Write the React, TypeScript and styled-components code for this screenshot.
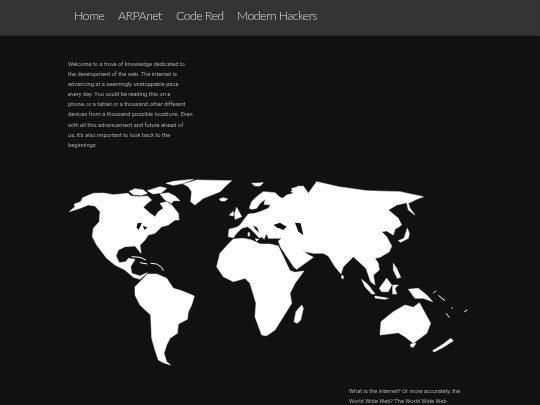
import * as React from "react";
import styled, { createGlobalStyle } from "styled-components";

const GlobalStyle = createGlobalStyle`
  html, body {
    margin: 0;
    height: 405px;
    overflow: hidden;
    background: #111111;
  }
`;

const links = ["Home", "ARPAnet", "Code Red", "Modern Hackers"];

const introLines = [
  "Welcome to a trove of knowledge dedicated to",
  "the development of the web. The internet is",
  "advancing at a seemingly unstoppable pace",
  "every day. You could be reading this on a",
  "phone, or a tablet or a thousand other different",
  "devices from a thousand possible locations. Even",
  "with all this advancement and future ahead of",
  "us, it's also important to look back to the",
  "beginnings.",
];

const questionLines = [
  "What is the internet? Or more accurately, the",
  "World Wide Web? The World Wide Web",
];

// coordinates are 3x page pixels, measured from (60, 170)
const land = [
  // north america
  "28,125 45,110 42,103 62,95 68,83 100,70 130,69 160,74 205,70 212,78 240,80 262,78 275,90 262,100 250,112 270,130 285,140 295,125 310,115 300,100 320,95 335,105 355,130 357,150 345,150 325,165 305,170 285,190 265,195 255,210 240,225 243,250 235,240 225,228 195,230 175,240 168,258 178,278 198,275 205,265 225,268 212,290 215,310 240,318 262,308 240,328 220,322 195,300 165,285 140,265 125,245 110,225 97,200 100,175 118,155 120,125 105,108 85,105 60,115",
  // arctic islands
  "208,64 225,56 250,60 262,70 245,76 220,74",
  "262,62 300,50 320,55 305,68 280,72",
  "300,72 325,68 345,78 360,92 340,92 335,100 315,90",
  "318,40 340,34 400,28 370,40 340,46",
  // greenland
  "370,42 410,30 515,32 500,45 480,65 455,75 430,85 405,105 392,95 395,65 385,50",
  // iceland
  "478,87 490,83 503,87 495,93 483,93",
  // south america
  "225,350 240,335 262,312 290,312 320,325 340,355 365,362 403,378 395,405 385,425 382,448 355,462 352,490 330,505 320,525 312,550 320,575 332,585 310,578 295,570 285,540 275,505 272,435 240,405 225,375",
  // africa
  "470,290 480,250 505,222 520,207 550,205 575,210 600,222 630,222 655,228 690,302 705,307 732,303 705,340 690,370 695,400 670,440 645,480 620,497 605,495 585,440 588,400 570,340 555,325 520,335 490,320",
  // eurasia
  "505,200 507,178 530,172 540,165 555,145 565,132 585,130 600,125 625,115 632,105 612,103 616,88 600,100 590,115 575,118 568,115 575,95 590,80 610,65 645,68 660,82 668,85 680,75 700,70 695,55 730,48 745,70 770,35 800,42 835,50 920,62 1020,65 1090,80 1070,88 1045,100 1050,115 1065,135 1045,120 1040,98 1010,105 985,120 1015,145 1025,165 1005,178 1000,195 980,183 965,185 980,200 988,215 995,228 988,245 960,262 945,265 955,280 958,300 940,315 945,345 932,335 918,295 880,260 850,290 843,312 825,290 805,258 790,250 760,250 735,245 718,228 738,250 760,262 710,298 702,292 662,232 655,213 665,205 625,205 620,190 612,208 600,195 592,172 578,165 585,178 600,192 606,200 598,204 585,190 570,175 562,170 545,175 530,190 520,203",
  // britain and ireland
  "530,112 545,140 525,148 524,130",
  "508,135 520,124 520,138",
  // sri lanka
  "845,316 850,318 850,326 845,325",
  // sicily and sardinia
  "586,206 596,208 590,214",
  "564,188 569,188 569,198 564,198",
  // madagascar
  "702,455 708,425 725,405 730,415 722,450 712,460",
  // australia
  "960,495 963,455 1000,425 1035,405 1060,412 1078,398 1112,460 1100,490 1060,520 1035,500 1015,488",
  // new zealand
  "1118,542 1150,522 1172,505 1180,512 1150,532 1122,546",
  "1052,522 1068,520 1060,532 1052,530",
  // japan
  "1015,212 1032,205 1042,175 1048,190 1045,205 1022,217",
  // borneo
  "958,355 980,325 995,345 985,365 965,365",
  // sumatra
  "905,328 925,345 945,372 935,372 915,350",
  // java
  "945,378 985,385 975,388 945,384",
  // new guinea
  "1045,358 1075,355 1100,375 1118,395 1090,385 1065,385",
  // sulawesi
  "998,345 1015,345 1005,355 1010,372 998,372",
  // philippines
  "1000,280 1010,295 1022,322 1012,325 1000,300",
  // svalbard
  "575,40 610,38 600,48 585,48",
  // novaya zemlya
  "692,65 715,48 725,50 702,68",
];

// seas cut out of the land, same coordinates
const seas = [
  "232,160 246,158 236,180 230,172",
  "248,168 262,172 254,180",
  "115,228 122,258 118,252",
  "640,165 660,158 680,170 670,180 650,172",
  "705,158 722,160 730,195 715,185",
];

const islands = [
  "M215 260 L240 262 L258 270",
  "M240 278 L262 282",
  "M272 280 L290 282 L305 292 L310 302",
  "M1120 370 L1128 362",
  "M1135 376 L1155 392",
  "M1158 430 L1168 442",
  "M1213 425 L1222 420",
  "M1175 412 L1178 416",
];

function WorldMap() {
  return (
    <MapSvg viewBox="0 0 1260 600" aria-label="World map">
      {land.map((points, i) => (
        <polygon
          key={i}
          points={points}
          fill="#ffffff"
          stroke="#ffffff"
          strokeWidth="1.5"
          strokeLinejoin="round"
        />
      ))}
      {seas.map((points, i) => (
        <polygon key={i} points={points} fill="#111111" />
      ))}
      {islands.map((d, i) => (
        <path key={i} d={d} fill="none" stroke="#ffffff" strokeWidth="3" />
      ))}
    </MapSvg>
  );
}

export default function App() {
  return (
    <Page>
      <GlobalStyle />
      <Header>
        <Nav>
          {links.map(link => (
            <NavLink key={link} href="#">
              {link}
            </NavLink>
          ))}
        </Nav>
      </Header>
      <Main>
        <Intro>
          {introLines.map(line => (
            <Line key={line}>{line}</Line>
          ))}
        </Intro>
        <WorldMap />
        <Question>
          {questionLines.map(line => (
            <Line key={line}>{line}</Line>
          ))}
        </Question>
      </Main>
    </Page>
  );
}

const Page = styled.div`
  height: 405px;
  overflow: hidden;
  background: repeating-conic-gradient(#131313 0 25%, #0f0f0f 0 50%) 0 0 / 2px 2px;
  font-family: Roboto, "Liberation Sans", sans-serif;
`;

const Header = styled.header`
  height: 36px;
  box-sizing: border-box;
  background: repeating-conic-gradient(#373737 0 25%, #313131 0 50%) 0 0 / 2px 2px;
  border-bottom: 1px solid #2a2a2a;
  padding: 0 0 5px 74px;
`;

const Nav = styled.nav`
  display: flex;
  gap: 14px;
  height: 100%;
  align-items: center;
`;

const NavLink = styled.a`
  color: #dcdcdc;
  font-family: Lato, Roboto, sans-serif;
  font-size: 12.5px;
  font-weight: 300;
  letter-spacing: -0.65px;
  text-decoration: none;
  will-change: transform;
`;

const Main = styled.main`
  padding-top: 23px;
  display: flex;
  flex-direction: column;
`;

const Intro = styled.p`
  margin: 0 0 0 68px;
  color: #a8a8a8;
  font-size: 5.7px;
  line-height: 10.1px;
  will-change: transform;
`;

const Line = styled.span`
  display: block;
  white-space: nowrap;
`;

const MapSvg = styled.svg`
  display: block;
  width: 420px;
  height: 200px;
  margin: 20px 0 0 60px;
`;

const Question = styled.p`
  margin: 16px 0 0 349px;
  color: #a8a8a8;
  font-size: 5.7px;
  line-height: 10.1px;
  will-change: transform;
`;
